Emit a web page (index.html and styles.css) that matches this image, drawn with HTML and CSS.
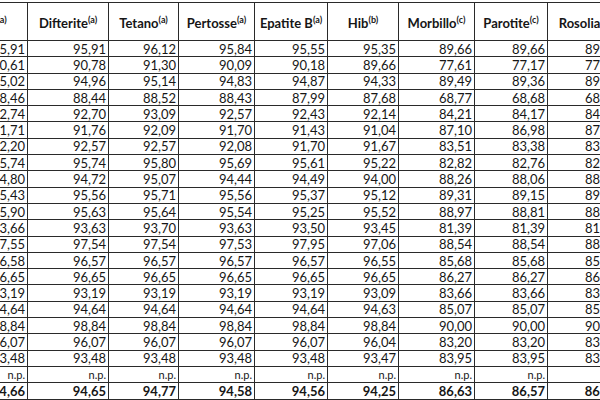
FILE: index.html
```html
<!DOCTYPE html>
<html lang="it">
<head>
<meta charset="utf-8">
<title>Coperture vaccinali</title>
<link rel="stylesheet" href="styles.css">
</head>
<body>
<div class="frame">
<table class="cov">
<colgroup>
<col class="c-first"><col class="c-dif"><col class="c-tet"><col class="c-per"><col class="c-epa"><col class="c-hib"><col class="c-mor"><col class="c-par"><col class="c-ros">
</colgroup>
<thead>
<tr>
<th>Polio<sup>(a)</sup></th>
<th>Difterite<sup>(a)</sup></th>
<th>Tetano<sup>(a)</sup></th>
<th>Pertosse<sup>(a)</sup></th>
<th>Epatite B<sup>(a)</sup></th>
<th>Hib<sup>(b)</sup></th>
<th>Morbillo<sup>(c)</sup></th>
<th>Parotite<sup>(c)</sup></th>
<th>Rosolia<sup>(c)</sup></th>
</tr>
</thead>
<tbody>
<tr><td>95,91</td><td>95,91</td><td>96,12</td><td>95,84</td><td>95,55</td><td>95,35</td><td>89,66</td><td>89,66</td><td>89,62</td></tr>
<tr><td>90,61</td><td>90,78</td><td>91,30</td><td>90,09</td><td>90,18</td><td>89,66</td><td>77,61</td><td>77,17</td><td>77,04</td></tr>
<tr><td>95,02</td><td>94,96</td><td>95,14</td><td>94,83</td><td>94,87</td><td>94,33</td><td>89,49</td><td>89,36</td><td>89,43</td></tr>
<tr><td>88,46</td><td>88,44</td><td>88,52</td><td>88,43</td><td>87,99</td><td>87,68</td><td>68,77</td><td>68,68</td><td>68,70</td></tr>
<tr><td>92,74</td><td>92,70</td><td>93,09</td><td>92,57</td><td>92,43</td><td>92,14</td><td>84,21</td><td>84,17</td><td>84,20</td></tr>
<tr><td>91,71</td><td>91,76</td><td>92,09</td><td>91,70</td><td>91,43</td><td>91,04</td><td>87,10</td><td>86,98</td><td>87,02</td></tr>
<tr><td>92,20</td><td>92,57</td><td>92,57</td><td>92,08</td><td>91,70</td><td>91,67</td><td>83,51</td><td>83,38</td><td>83,30</td></tr>
<tr><td>95,74</td><td>95,74</td><td>95,80</td><td>95,69</td><td>95,61</td><td>95,22</td><td>82,82</td><td>82,76</td><td>82,80</td></tr>
<tr><td>94,80</td><td>94,72</td><td>95,07</td><td>94,44</td><td>94,49</td><td>94,00</td><td>88,26</td><td>88,06</td><td>88,04</td></tr>
<tr><td>95,43</td><td>95,56</td><td>95,71</td><td>95,56</td><td>95,37</td><td>95,12</td><td>89,31</td><td>89,15</td><td>89,30</td></tr>
<tr><td>95,90</td><td>95,63</td><td>95,64</td><td>95,54</td><td>95,25</td><td>95,52</td><td>88,97</td><td>88,81</td><td>88,71</td></tr>
<tr><td>93,66</td><td>93,63</td><td>93,70</td><td>93,63</td><td>93,50</td><td>93,45</td><td>81,39</td><td>81,39</td><td>81,32</td></tr>
<tr><td>97,55</td><td>97,54</td><td>97,54</td><td>97,53</td><td>97,95</td><td>97,06</td><td>88,54</td><td>88,54</td><td>88,52</td></tr>
<tr><td>96,58</td><td>96,57</td><td>96,57</td><td>96,57</td><td>96,57</td><td>96,55</td><td>85,68</td><td>85,68</td><td>85,64</td></tr>
<tr><td>96,65</td><td>96,65</td><td>96,65</td><td>96,65</td><td>96,65</td><td>96,65</td><td>86,27</td><td>86,27</td><td>86,25</td></tr>
<tr><td>93,19</td><td>93,19</td><td>93,19</td><td>93,19</td><td>93,19</td><td>93,09</td><td>83,66</td><td>83,66</td><td>83,63</td></tr>
<tr><td>94,64</td><td>94,64</td><td>94,64</td><td>94,64</td><td>94,64</td><td>94,63</td><td>85,07</td><td>85,07</td><td>85,05</td></tr>
<tr><td>98,84</td><td>98,84</td><td>98,84</td><td>98,84</td><td>98,84</td><td>98,84</td><td>90,00</td><td>90,00</td><td>90,00</td></tr>
<tr><td>96,07</td><td>96,07</td><td>96,07</td><td>96,07</td><td>96,07</td><td>96,04</td><td>83,20</td><td>83,20</td><td>83,20</td></tr>
<tr><td>93,48</td><td>93,48</td><td>93,48</td><td>93,48</td><td>93,48</td><td>93,47</td><td>83,95</td><td>83,95</td><td>83,93</td></tr>
<tr class="np"><td>n.p.</td><td>n.p.</td><td>n.p.</td><td>n.p.</td><td>n.p.</td><td>n.p.</td><td>n.p.</td><td>n.p.</td><td>n.p.</td></tr>
<tr class="total"><td>94,66</td><td>94,65</td><td>94,77</td><td>94,58</td><td>94,56</td><td>94,25</td><td>86,63</td><td>86,57</td><td>86,55</td></tr>
</tbody>
</table>
</div>
</body>
</html>
```

FILE: styles.css
```css
html, body {
  margin: 0;
  padding: 0;
  background: #ffffff;
}

.frame {
  width: 600px;
  height: 400px;
  overflow: hidden;
}

.cov {
  border-collapse: collapse;
  table-layout: fixed;
  width: 673px;
  margin-left: -53px;
  margin-top: 2px;
  font-family: Lato, "Open Sans", sans-serif;
  font-size: 13px;
  color: #161616;
}

.c-first { width: 80px; }
.c-dif { width: 81px; }
.c-tet { width: 70px; }
.c-per { width: 76px; }
.c-epa { width: 73px; }
.c-hib { width: 71px; }
.c-mor { width: 76px; }
.c-par { width: 73px; }
.c-ros { width: 73px; }

.cov th,
.cov td {
  border: 1px solid #2a2a2a;
  white-space: nowrap;
  overflow: hidden;
}

.cov th {
  height: 34px;
  padding: 3px 2px 0;
  font-weight: bold;
  text-align: center;
  vertical-align: middle;
}

.cov th sup {
  font-size: 9px;
  vertical-align: 5px;
  line-height: 0;
  font-weight: bold;
}

.cov td {
  height: 15.3px;
  padding: 0 2px 0 2px;
  text-align: right;
  line-height: 14px;
}

.cov .np td {
  font-size: 11px;
}

.cov .total td {
  font-weight: bold;
}
```
